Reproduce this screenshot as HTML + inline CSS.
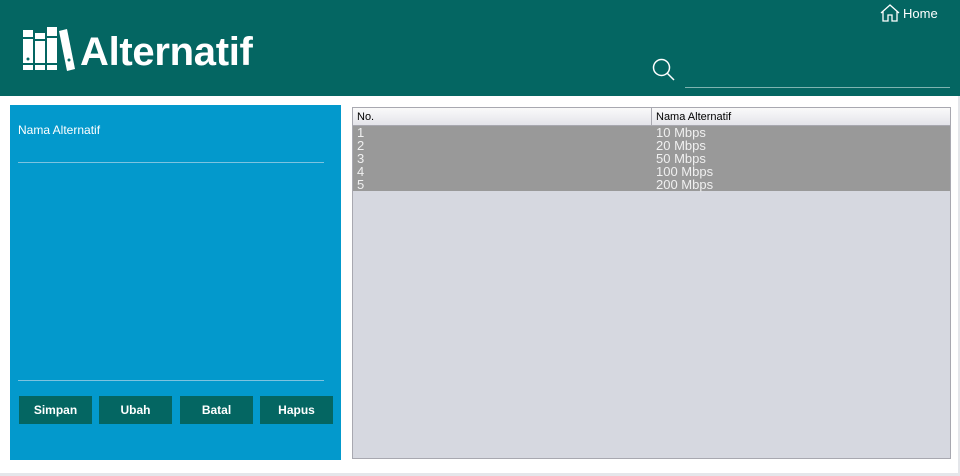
<!DOCTYPE html>
<html><head><style>
body{margin:0;width:960px;height:476px;background:#fff;position:relative;overflow:hidden;font-family:"Liberation Sans",sans-serif}
.hdr{position:absolute;left:0;top:0;width:960px;height:96px;background:#046662}
.title{position:absolute;left:80px;top:30px;color:#fff;font-weight:bold;font-size:40px;letter-spacing:-0.3px}
.home{position:absolute;left:903px;top:6px;color:#fff;font-size:13px}
.search{position:absolute;left:685px;top:87px;width:265px;height:1px;background:#7fb3b0}
.left{position:absolute;left:10px;top:105px;width:331px;height:355px;background:#0399cc}
.lbl{position:absolute;left:8px;top:18px;color:#fff;font-size:12px}
.ln{position:absolute;left:8px;width:306px;height:1px;background:#7cc3e0}
.btn{position:absolute;top:291px;width:73px;height:28px;background:#046662;color:#fff;font-weight:bold;font-size:12px;text-align:center;line-height:28px}
.tbl{position:absolute;left:352px;top:107px;width:597px;height:350px;background:#d6d8e0;border:1px solid #a8a8b0}
.th{position:absolute;left:0;top:0;width:597px;height:17px;background:linear-gradient(#fafafa,#e4e4ea);border-bottom:1px solid #a8a8b0;font-size:11px;color:#000}
.rows{position:absolute;left:0;top:18px;width:597px;height:65px;background:#999;color:#f0f0f0;font-size:13px;line-height:13px}
</style></head><body>
<div class="hdr">
<svg style="position:absolute;left:22px;top:27px" width="56" height="46" viewBox="0 0 56 46" fill="#fff">
<rect x="1" y="3" width="10" height="40"/><rect x="13" y="6" width="10" height="37"/><rect x="25" y="0" width="10" height="43"/>
<path d="M37 4 L45 2 L53 42 L45 44Z"/>
<g fill="#046662"><rect x="1" y="10" width="10" height="2"/><rect x="13" y="12" width="10" height="2"/><rect x="25" y="9" width="10" height="2"/><rect x="1" y="36" width="10" height="2"/><rect x="13" y="36" width="10" height="2"/><rect x="25" y="36" width="10" height="2"/><circle cx="6" cy="32" r="1.5"/><circle cx="47" cy="33" r="1.5"/></g>
</svg>
<div class="title">Alternatif</div>
<svg style="position:absolute;left:880px;top:4px" width="20" height="18" viewBox="0 0 20 18" fill="none" stroke="#fff" stroke-width="1.3"><path d="M1 9 L10 1 L19 9 M3 7 V17 H8 V11 H12 V17 H17 V7"/></svg>
<div class="home">Home</div>
<svg style="position:absolute;left:652px;top:58px" width="24" height="24" viewBox="0 0 24 24" fill="none" stroke="#fff" stroke-width="1.5"><circle cx="9.5" cy="9.5" r="8"/><path d="M15.5 15.5 L22 22"/></svg>
<div class="search"></div>
</div>
<div class="left">
<div class="lbl">Nama Alternatif</div>
<div class="ln" style="top:57px"></div>
<div class="ln" style="top:275px"></div>
<div class="btn" style="left:9px">Simpan</div>
<div class="btn" style="left:89px">Ubah</div>
<div class="btn" style="left:170px">Batal</div>
<div class="btn" style="left:250px">Hapus</div>
</div>
<div class="tbl">
<div class="th"><span style="position:absolute;left:4px;top:3px">No.</span><span style="position:absolute;left:298px;top:0;height:17px;border-left:1px solid #a8a8b0"></span><span style="position:absolute;left:303px;top:3px">Nama Alternatif</span></div>
<div class="rows">
<div style="position:absolute;left:4px;top:0">1<br>2<br>3<br>4<br>5</div>
<div style="position:absolute;left:303px;top:0">10 Mbps<br>20 Mbps<br>50 Mbps<br>100 Mbps<br>200 Mbps</div>
</div>
</div>
<div style="position:absolute;left:958px;top:96px;width:2px;height:380px;background:#e4e6ea"></div>
<div style="position:absolute;left:0;top:473px;width:960px;height:3px;background:#e4e6ea"></div>
</body></html>
